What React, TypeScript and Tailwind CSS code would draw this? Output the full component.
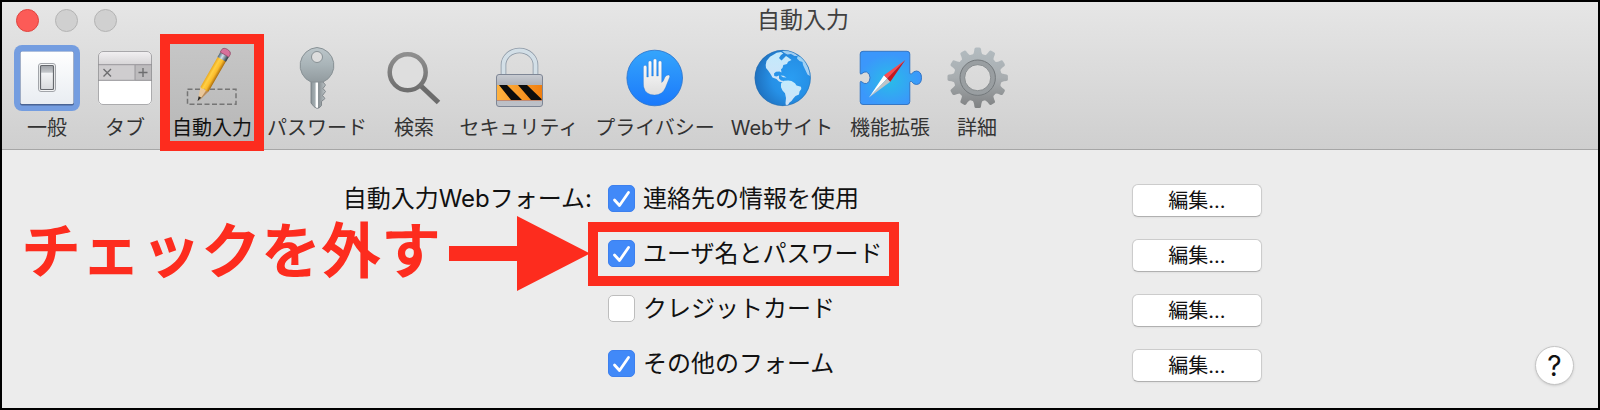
import { ReactNode, useState } from "react";
import { clsx } from "clsx";

const GeneralIcon = () => (
  <svg viewBox="0 0 68 68" className="size-[68px]" aria-hidden="true">
    <defs>
      <linearGradient id="plate" x1="0" y1="0" x2="0" y2="1">
        <stop offset="0" stopColor="#ffffff" />
        <stop offset="1" stopColor="#e9edf2" />
      </linearGradient>
      <linearGradient id="rocker" x1="0" y1="0" x2="0" y2="1">
        <stop offset="0" stopColor="#9ea1a6" />
        <stop offset="0.28" stopColor="#c3c6ca" />
        <stop offset="0.32" stopColor="#f3f4f6" />
        <stop offset="1" stopColor="#d8dadd" />
      </linearGradient>
    </defs>
    <rect x="1" y="1" width="66" height="66" rx="8" fill="#749de0" />
    <rect x="7" y="7.5" width="54" height="54" rx="2" fill="#4a6494" />
    <rect x="7.5" y="7.5" width="53" height="52.5" rx="1.5" fill="url(#plate)" />
    <rect x="25.5" y="19.5" width="17" height="28" rx="2.5" fill="#f4f5f6" stroke="#a2a5aa" />
    <rect x="27.5" y="21.5" width="13" height="24" rx="1" fill="url(#rocker)" stroke="#66696e" strokeWidth="1.2" />
  </svg>
);

const TabsIcon = () => (
  <svg viewBox="0 0 68 68" className="size-[68px]" aria-hidden="true">
    <defs>
      <linearGradient id="tab-head" x1="0" y1="0" x2="0" y2="1">
        <stop offset="0" stopColor="#f3f1f3" />
        <stop offset="1" stopColor="#d6d4d6" />
      </linearGradient>
      <clipPath id="tab-clip">
        <rect x="7" y="7" width="54" height="54" rx="5" />
      </clipPath>
    </defs>
    <g clipPath="url(#tab-clip)">
      <rect x="7" y="7" width="54" height="54" fill="#ffffff" />
      <rect x="7" y="7" width="54" height="14" fill="url(#tab-head)" />
      <rect x="7" y="20.5" width="54" height="16" fill="#cfcdcf" />
      <rect x="44" y="20.5" width="17" height="16" fill="#bdbbbd" />
      <path d="M7 20.7h54M7 36.3h54M44 21v15" stroke="#98969a" />
    </g>
    <rect x="7.5" y="7.5" width="53" height="53" rx="4.5" fill="none" stroke="#8f8f91" strokeOpacity="0.75" />
    <path d="M12.5 25l7.5 7.5M20 25l-7.5 7.5" stroke="#6d6d6f" strokeWidth="1.4" />
    <path d="M52 24v9M47.5 28.5h9" stroke="#6d6d6f" strokeWidth="1.4" />
  </svg>
);

const AutoFillIcon = () => (
  <svg viewBox="0 0 68 68" className="size-[68px]" aria-hidden="true">
    <defs>
      <linearGradient id="pencil-body" x1="0" y1="0" x2="1" y2="0">
        <stop offset="0" stopColor="#eba91f" />
        <stop offset="0.3" stopColor="#ffd045" />
        <stop offset="0.65" stopColor="#fbbb2a" />
        <stop offset="1" stopColor="#a86a0c" />
      </linearGradient>
      <linearGradient id="ferrule" x1="0" y1="0" x2="1" y2="0">
        <stop offset="0" stopColor="#4c6273" />
        <stop offset="0.4" stopColor="#cfe0ec" />
        <stop offset="1" stopColor="#26323b" />
      </linearGradient>
    </defs>
    <rect x="9.5" y="45.3" width="48.5" height="15" fill="none" stroke="#757575" strokeWidth="1.5" strokeDasharray="5 2.5" />
    <g transform="translate(20 56.5) rotate(30)">
      <path d="M0 0L-4.7-13L4.7-13Z" fill="#e9c79a" />
      <path d="M1 0L4.7-13L2-13Z" fill="#b98d5b" />
      <path d="M0 1L-1.5-4L1.5-4Z" fill="#2d2a28" />
      <path d="M-4.7-48H4.7V-13L2-12L0-13.5L-2-12L-4.7-13Z" fill="url(#pencil-body)" />
      <rect x="-4.9" y="-53" width="9.8" height="5.5" fill="url(#ferrule)" />
      <path d="M-4.9-53V-56Q-4.5-59 0-59T4.9-56V-53Z" fill="#d8709b" stroke="#8b4763" strokeWidth="0.7" />
    </g>
  </svg>
);

const KeyIcon = () => (
  <svg viewBox="0 0 68 68" className="size-[68px]" aria-hidden="true">
    <defs>
      <linearGradient id="key-head" x1="0" y1="0" x2="0" y2="1">
        <stop offset="0" stopColor="#bcc6ca" />
        <stop offset="0.5" stopColor="#a9b4b8" />
        <stop offset="1" stopColor="#929b9f" />
      </linearGradient>
      <linearGradient id="key-shaft" x1="0" y1="0" x2="1" y2="0">
        <stop offset="0" stopColor="#8d979b" />
        <stop offset="0.28" stopColor="#a4adb1" />
        <stop offset="0.36" stopColor="#ffffff" />
        <stop offset="0.46" stopColor="#ffffff" />
        <stop offset="0.52" stopColor="#868e92" />
        <stop offset="1" stopColor="#bfc6c9" />
      </linearGradient>
    </defs>
    <path
      d="M28 36V59Q31 63.5 34 64.5Q37 64 38.5 61.5V57.5L42 54.5L39.5 51.5L42.5 47.5L40 44.5L42.5 41L40 38V36Z"
      fill="url(#key-shaft)"
      stroke="#71797d"
      strokeWidth="0.8"
    />
    <path
      fillRule="evenodd"
      d="M34 3.5a18 18 0 0 1 6 34.5L28 38A18 18 0 0 1 34 3.5ZM34 7.5a5.5 5.5 0 1 0 0 11a5.5 5.5 0 1 0 0-11Z"
      fill="url(#key-head)"
      stroke="#889195"
    />
  </svg>
);

const SearchIcon = () => (
  <svg viewBox="0 0 68 68" className="size-[68px]" aria-hidden="true">
    <defs>
      <linearGradient id="lens-ring" x1="0" y1="0" x2="0" y2="1">
        <stop offset="0" stopColor="#8f8f8f" />
        <stop offset="1" stopColor="#6e6e6e" />
      </linearGradient>
    </defs>
    <path d="M41 42L58.5 58.5" stroke="#6c6c6c" strokeWidth="5" />
    <circle cx="27.7" cy="28.3" r="18" fill="#dedede" stroke="url(#lens-ring)" strokeWidth="4.5" />
  </svg>
);

const LockIcon = () => (
  <svg viewBox="0 0 68 68" className="size-[68px]" aria-hidden="true">
    <defs>
      <linearGradient id="lock-body" x1="0" y1="0" x2="0" y2="1">
        <stop offset="0" stopColor="#c9ccd2" />
        <stop offset="0.3" stopColor="#b0b4bc" />
        <stop offset="1" stopColor="#bec2c9" />
      </linearGradient>
      <linearGradient id="lock-band" x1="0" y1="0" x2="1" y2="0">
        <stop offset="0" stopColor="#ffb340" />
        <stop offset="1" stopColor="#f07f10" />
      </linearGradient>
    </defs>
    <path d="M18.5 31V21a16 14.5 0 0 1 32 0V31" fill="none" stroke="#8b96a3" strokeWidth="5.6" />
    <path d="M18.5 31V21a16 14.5 0 0 1 32 0V31" fill="none" stroke="#d3dfe7" strokeWidth="4" />
    <rect x="11.5" y="30.5" width="46" height="32" rx="2.5" fill="url(#lock-body)" stroke="#7e8695" />
    <rect x="12" y="41" width="45" height="15" fill="url(#lock-band)" />
    <path d="M14 41H22L37 56H26ZM33 41H42L56.5 55V56H46Z" fill="#0d0d0d" />
    <path d="M12 56.5h45" stroke="#c07d63" strokeWidth="0.8" />
  </svg>
);

const PrivacyIcon = () => (
  <svg viewBox="0 0 68 68" className="size-[68px]" aria-hidden="true">
    <defs>
      <linearGradient id="hand-bg" x1="0" y1="0" x2="0" y2="1">
        <stop offset="0" stopColor="#35a5fc" />
        <stop offset="1" stopColor="#1a79fb" />
      </linearGradient>
      <linearGradient id="hand" x1="0" y1="0" x2="0" y2="1">
        <stop offset="0" stopColor="#ffffff" />
        <stop offset="1" stopColor="#dedede" />
      </linearGradient>
    </defs>
    <circle cx="33.7" cy="34" r="27.8" fill="url(#hand-bg)" stroke="#2872cc" strokeWidth="0.8" />
    <path
      d="M22.4 23a1.7 1.7 0 0 1 3.4 0V33H27.3V18.5a1.7 1.7 0 0 1 3.4 0V32H32.3V16.5a1.7 1.7 0 0 1 3.4 0V32H37.3V18.5a1.7 1.7 0 0 1 3.4 0V38.5Q42.5 37.5 43.8 33.5Q45 30.8 47.5 31Q49.4 31.3 48.7 33L44.5 43.5Q41.5 51 33.5 51Q24.5 51 22.7 43Q22.4 41 22.4 38Z"
      fill="url(#hand)"
      stroke="#1863c2"
      strokeOpacity="0.5"
      strokeWidth="0.6"
    />
  </svg>
);

const WebsitesIcon = () => (
  <svg viewBox="0 0 68 68" className="size-[68px]" aria-hidden="true">
    <defs>
      <radialGradient id="ocean" cx="0.65" cy="0.5" r="0.7">
        <stop offset="0" stopColor="#2a9df2" />
        <stop offset="0.5" stopColor="#2690e6" />
        <stop offset="1" stopColor="#1d6bb8" />
      </radialGradient>
      <linearGradient id="land" x1="0" y1="0" x2="0" y2="1">
        <stop offset="0" stopColor="#c2eafc" />
        <stop offset="1" stopColor="#cfe2f7" />
      </linearGradient>
      <clipPath id="globe-clip">
        <circle cx="34.7" cy="34" r="27.8" />
      </clipPath>
    </defs>
    <circle cx="34.7" cy="34" r="28" fill="url(#ocean)" />
    <g clipPath="url(#globe-clip)" fill="url(#land)">
      <path d="M17.7 21L18.5 17L22 12.7L25 11L28.7 8.7L33 8L35.3 9.5L33 11L31 14L33.5 16.5L36 14L38 12L40.3 13.5L43.5 16L40 17.7L39 20L35.3 21L34.5 24L33 25.3L33.5 28.5L31.5 27.5L28 27.7L26 29.5L26.3 32L28.5 32.5L31 31.5L31 34.5L33 36.5L36 37L34.5 38.5L31 37.5L28.5 35L24.5 33.5L22.5 30L20.3 26.7L18 24Z" />
      <path d="M33 39.5L36 36.8L40.3 36.5L43.5 37L47 39.3L48.5 41.5L53 42.7L53.3 45L51.5 47.5L51 50.5L47.5 52L45.3 54.5L43.5 57L41.5 58.5L40 61L38 62L37.5 59L38 54L37 49.3L34.5 46.5L33 43.3Z" />
      <path d="M49.7 12L53.7 13.3L57 17.5L59.7 22.7L61.5 28L62 32L59.5 30.5L57 25.3L55 21L54.5 18L51.5 17L49 14.5Z" opacity="0.75" />
      <path d="M34 7L38 6.5L43 7.5L47 9.5L50 12L46.5 12L43 10L39.5 10.5L36.5 9Z" opacity="0.75" />
      <path d="M32.5 31.5L35.5 31.8L38.5 33.5L35 33.3Z" />
    </g>
    <circle cx="34.7" cy="34" r="27.7" fill="none" stroke="#2b6ba9" strokeOpacity="0.6" strokeWidth="0.8" />
  </svg>
);

const ExtensionsIcon = () => (
  <svg viewBox="0 0 68 68" className="size-[68px]" aria-hidden="true">
    <defs>
      <radialGradient id="puzzle" cx="0.48" cy="0.55" r="0.5">
        <stop offset="0" stopColor="#29bce8" />
        <stop offset="1" stopColor="#3b97fb" />
      </radialGradient>
    </defs>
    <path
      d="M7 7.3H51Q53.8 7.3 53.8 10V29Q54 30.5 55.5 30Q57.5 27 60.5 27Q65.5 27.5 65.5 33.8T60.5 40.5Q57.5 40.5 55.5 37.5Q54 37 53.8 38.5V57.5Q53.8 60.5 51 60.5H7Q4.2 60.5 4.2 57.5V38.5Q4.2 36.5 6 38Q8 40 10.5 39.5Q14 38.5 14 33.8T10.5 28Q8 27.5 6 29.5Q4.2 31 4.2 29V10Q4.2 7.3 7 7.3Z"
      fill="url(#puzzle)"
      stroke="#2d6fc0"
      strokeWidth="0.9"
    />
    <path d="M13 53.5L28 31.3L31.2 34.5Z" fill="#ffffff" />
    <path d="M13 53.5L31.2 34.5L34.3 37.7Z" fill="#bfc3c6" />
    <path d="M49.3 16L28 31.3L31.2 34.5Z" fill="#ff4a4d" />
    <path d="M49.3 16L31.2 34.5L34.3 37.7Z" fill="#c8161c" />
  </svg>
);

const TEETH = [0, 30, 60, 90, 120, 150, 180, 210, 240, 270, 300, 330];

const AdvancedIcon = () => (
  <svg viewBox="0 0 68 68" className="size-[68px]" aria-hidden="true">
    <defs>
      <linearGradient id="gear" gradientUnits="userSpaceOnUse" x1="0" y1="3" x2="0" y2="64">
        <stop offset="0" stopColor="#b3bcc1" />
        <stop offset="0.5" stopColor="#a8adb0" />
        <stop offset="1" stopColor="#7f8182" />
      </linearGradient>
      <mask id="gear-mask">
        <circle cx="34.7" cy="33.7" r="24" fill="#ffffff" />
        {TEETH.map((angle) => (
          <path
            key={angle}
            d="M28.5 12Q31 10.5 31.4 5Q31.6 3.5 33 3.5H36.4Q37.8 3.5 38 5Q38.4 10.5 41 12Z"
            fill="#ffffff"
            transform={`rotate(${angle} 34.7 33.7)`}
          />
        ))}
        <circle cx="34.7" cy="33.7" r="13" fill="#000000" />
      </mask>
    </defs>
    <rect width="68" height="68" fill="url(#gear)" mask="url(#gear-mask)" />
    <circle cx="34.7" cy="33.7" r="15.5" fill="none" stroke="#999ea1" strokeWidth="4.5" />
    <circle cx="34.7" cy="33.7" r="17.7" fill="none" stroke="#74797c" />
    <circle cx="34.7" cy="33.7" r="13" fill="none" stroke="#7c8184" strokeWidth="0.8" />
  </svg>
);

type Tool = { name: string; width: string; icon: ReactNode };

const TOOLS: Tool[] = [
  { name: "一般", width: "w-[82px]", icon: <GeneralIcon /> },
  { name: "タブ", width: "w-[74px]", icon: <TabsIcon /> },
  { name: "自動入力", width: "w-[100px]", icon: <AutoFillIcon /> },
  { name: "パスワード", width: "w-[110px]", icon: <KeyIcon /> },
  { name: "検索", width: "w-[84px]", icon: <SearchIcon /> },
  { name: "セキュリティ", width: "w-[126px]", icon: <LockIcon /> },
  { name: "プライバシー", width: "w-[146px]", icon: <PrivacyIcon /> },
  { name: "Webサイト", width: "w-[108px]", icon: <WebsitesIcon /> },
  { name: "機能拡張", width: "w-[108px]", icon: <ExtensionsIcon /> },
  { name: "詳細", width: "w-[66px]", icon: <AdvancedIcon /> },
];

const OPTIONS = [
  { id: "contacts", name: "連絡先の情報を使用", checked: true },
  { id: "passwords", name: "ユーザ名とパスワード", checked: true },
  { id: "cards", name: "クレジットカード", checked: false },
  { id: "forms", name: "その他のフォーム", checked: true },
];

const ToolbarItem = ({
  tool,
  isActive,
  onClick,
}: {
  tool: Tool;
  isActive: boolean;
  onClick: () => void;
}) => (
  <button
    type="button"
    onClick={onClick}
    className={clsx("relative flex justify-center shrink-0", tool.width)}
  >
    <span
      className={clsx(
        "flex flex-col items-center",
        isActive && "w-[84px] bg-linear-to-b from-[#c6c6c6] to-[#b7b7b7]"
      )}
    >
      {tool.icon}
      <span
        className={clsx(
          "text-xl leading-8 whitespace-nowrap",
          isActive ? "text-[#111111]" : "text-[#333333]"
        )}
      >
        {tool.name}
      </span>
    </span>
    {isActive && (
      <span className="absolute -inset-x-0.5 -top-2.5 -bottom-[7px] z-10 border-10 border-[#fd2c1e]" />
    )}
  </button>
);

const Callout = () => (
  <div className="absolute inset-y-0 right-full mr-[18px] flex items-center gap-2 text-[#fd2c1e] pointer-events-none">
    <p className="pb-1.5 text-[60px] leading-[80px] font-bold whitespace-nowrap">
      チェックを外す
    </p>
    <svg viewBox="0 0 141 75" className="h-[75px] w-[141px] shrink-0" aria-hidden="true">
      <path d="M0 30H68V0L141 37.5L68 75V45H0Z" fill="currentColor" />
    </svg>
  </div>
);

const OptionCheckbox = ({
  id,
  name,
  checked,
}: {
  id: string;
  name: string;
  checked: boolean;
}) => (
  <div className="flex items-center gap-2">
    <span className="relative flex">
      <input
        id={id}
        type="checkbox"
        defaultChecked={checked}
        className="peer size-[27px] appearance-none rounded-[5px] border border-[#bdbdbd] bg-white checked:border-[#3d80ee] checked:bg-[#4189f8]"
      />
      <svg
        viewBox="0 0 27 27"
        className="absolute inset-0 hidden size-[27px] pointer-events-none peer-checked:block"
        aria-hidden="true"
      >
        <path
          d="M6.5 15L11.5 20.5L20.5 7.5"
          fill="none"
          stroke="#ffffff"
          strokeWidth="2.8"
          strokeLinecap="round"
          strokeLinejoin="round"
        />
      </svg>
    </span>
    <label htmlFor={id} className="whitespace-nowrap">
      {name}
    </label>
  </div>
);

export default function App() {
  const [active, setActive] = useState("自動入力");

  return (
    <main className="border-2 border-black bg-[#ececec] font-[Inter,'Noto_Sans_CJK_JP',sans-serif] text-[#111111] overflow-hidden">
      <header className="border-b border-[#a6a6a6] bg-linear-to-b from-[#e6e6e6] to-[#cfcfcf] pb-[5px]">
        <div className="grid h-9 grid-cols-3 items-center pr-2 pl-3.5">
          <div className="flex gap-4">
            <button type="button" aria-label="閉じる" className="size-[23px] rounded-full border border-[#e0443e] bg-[#fc5b57]" />
            <button type="button" aria-label="しまう" className="size-[23px] rounded-full border border-[#b4b4b4] bg-[#d0d0d0]" />
            <button type="button" aria-label="拡大" className="size-[23px] rounded-full border border-[#b4b4b4] bg-[#d0d0d0]" />
          </div>
          <h1 className="text-center text-[23px] leading-8 text-[#404040]">
            {active}
          </h1>
        </div>
        <nav className="flex pt-1.5 pl-1">
          {TOOLS.map((tool) => (
            <ToolbarItem
              key={tool.name}
              tool={tool}
              isActive={tool.name === active}
              onClick={() => setActive(tool.name)}
            />
          ))}
        </nav>
      </header>

      <section className="pt-[21px] pb-[17px] text-2xl">
        {OPTIONS.map((option, index) => (
          <div key={option.id} className="grid h-[55px] grid-cols-[606fr_524fr_466fr] items-center">
            <p className="pr-4 text-right whitespace-nowrap">
              {index === 0 && "自動入力Webフォーム:"}
            </p>
            <div className="relative">
              <OptionCheckbox {...option} />
              {option.id === "passwords" && (
                <>
                  <div className="absolute -inset-y-4 -left-5 w-[311px] border-10 border-[#fd2c1e] pointer-events-none" />
                  <Callout />
                </>
              )}
            </div>
            <div className="flex items-center justify-between pt-1 pr-6">
              <button
                type="button"
                className="h-[33px] w-[130px] rounded-md border border-[#cccccc] border-b-[#b0b0b0] bg-white text-xl leading-7 shadow-xs"
              >
                編集...
              </button>
              {index === OPTIONS.length - 1 && (
                <button
                  type="button"
                  aria-label="ヘルプ"
                  className="size-[39px] rounded-full border border-[#c4c4c4] bg-white text-[28px] leading-8 shadow-sm"
                >
                  ?
                </button>
              )}
            </div>
          </div>
        ))}
      </section>
    </main>
  );
}
